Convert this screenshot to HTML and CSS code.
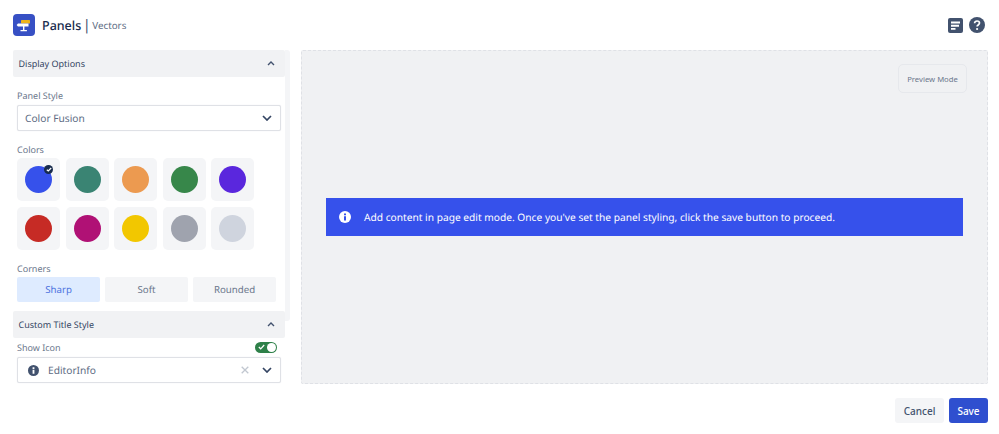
FILE: index.html
```html
<!DOCTYPE html>
<html lang="en">
<head>
<meta charset="utf-8">
<title>Panels | Vectors</title>
<link rel="stylesheet" href="styles.css">
</head>
<body>
<header class="top">
  <div class="brand">
    <svg class="logo" width="22" height="22" viewBox="0 0 22 22"><rect width="22" height="22" rx="4" fill="#3750c4"/><rect x="8" y="6" width="9" height="3.6" rx=".6" fill="#eeb41c"/><path d="M5 9.4h10.5v3H5l-1.4-1.5z" fill="#fff"/><path d="M10 12h1.4v4H10zM7.5 16h6.4v1.2H7.500z" fill="#fff"/></svg>
    <span class="name">Panels</span><span class="sep">|</span><span class="sub">Vectors</span>
  </div>
  <div class="tools">
    <svg width="15" height="15" viewBox="0 0 15 15"><rect width="15" height="15" rx="2" fill="#42526e"/><path d="M3 3.500h9v2H3zM3 6.700h8v2H3zM3 10h4.500v1.800H3z" fill="#fff"/></svg>
    <svg width="16" height="16" viewBox="0 0 16 16"><circle cx="8" cy="8" r="8" fill="#42526e"/><path d="M5.600 6.200c0-1.400 1.100-2.200 2.400-2.200s2.500.8 2.500 2.100c0 1.900-2.400 1.900-2.400 3.500" fill="none" stroke="#fff" stroke-width="1.700"/><circle cx="8.100" cy="12" r="1.100" fill="#fff"/></svg>
  </div>
</header>
<main class="body">
  <aside class="side">
    <section class="scroll">
      <div class="acc">Display Options<svg class="up" width="8" height="5" viewBox="0 0 8 5"><path d="M1 4l3-3 3 3" fill="none" stroke="#42526e" stroke-width="1.400"/></svg></div>
      <div class="group">
        <label class="lab first">Panel Style</label>
        <div class="select"><span class="val">Color Fusion</span><svg class="down" width="10" height="6" viewBox="0 0 10 6"><path d="M1 1l4 4 4-4" fill="none" stroke="#344563" stroke-width="1.700"/></svg></div>
        <label class="lab colors">Colors</label>
        <div class="swatches">
          <div class="sw"><i class="dot c1"></i><span class="tick"><svg width="6" height="5" viewBox="0 0 6 5"><path d="M.8 2.700l1.500 1.300L5.200 1" fill="none" stroke="#fff" stroke-width="1.200"/></svg></span></div>
          <div class="sw"><i class="dot c2"></i></div>
          <div class="sw"><i class="dot c3"></i></div>
          <div class="sw"><i class="dot c4"></i></div>
          <div class="sw"><i class="dot c5"></i></div>
          <div class="sw"><i class="dot c6"></i></div>
          <div class="sw"><i class="dot c7"></i></div>
          <div class="sw"><i class="dot c8"></i></div>
          <div class="sw"><i class="dot c9"></i></div>
          <div class="sw"><i class="dot c10"></i></div>
        </div>
        <label class="lab corners">Corners</label>
        <div class="seg">
          <span class="opt on">Sharp</span><span class="opt">Soft</span><span class="opt">Rounded</span>
        </div>
      </div>
    </section>
    <div class="acc second">Custom Title Style<svg class="up" width="8" height="5" viewBox="0 0 8 5"><path d="M1 4l3-3 3 3" fill="none" stroke="#42526e" stroke-width="1.400"/></svg></div>
    <div class="group tail">
      <div class="row"><label class="lab">Show Icon</label>
        <span class="toggle"><svg width="7" height="6" viewBox="0 0 7 6"><path d="M.8 3l1.900 1.800L6.200 1" fill="none" stroke="#fff" stroke-width="1.200"/></svg><b class="knob"></b></span>
      </div>
      <div class="select icon">
        <svg class="info" width="11" height="11" viewBox="0 0 12 12"><circle cx="6" cy="6" r="6" fill="#42526e"/><path d="M5 5.200h2v4.300H5zM5 2.500h2v1.800H5z" fill="#fff"/></svg>
        <span class="val grow">EditorInfo</span>
        <svg class="clear" width="8" height="8" viewBox="0 0 8 8"><path d="M.7.700l6.600 6.600M7.300.700L.7 7.300" stroke="#c1c7d0" stroke-width="1.300"/></svg>
        <svg class="down" width="10" height="6" viewBox="0 0 10 6"><path d="M1 1l4 4 4-4" fill="none" stroke="#344563" stroke-width="1.700"/></svg>
      </div>
    </div>
  </aside>
  <section class="canvas">
    <div class="canvas-top"><button class="preview">Preview Mode</button></div>
    <div class="banner">
      <svg width="12" height="12" viewBox="0 0 12 12"><circle cx="6" cy="6" r="6" fill="#fff"/><path d="M5 5.200h2v4.300H5zM5 2.500h2v1.800H5z" fill="#3651eb"/></svg>
      <span>Add content in page edit mode. Once you've set the panel styling, click the save button to proceed.</span>
    </div>
  </section>
</main>
<footer class="foot">
  <button class="btn cancel">Cancel</button>
  <button class="btn save">Save</button>
</footer>
</body>
</html>
```
FILE: styles.css
```css
* { box-sizing: border-box; }
html, body { margin: 0; padding: 0; }
body { width: 999px; height: 434px; overflow: hidden; background: #fff; font-family: "Noto Sans", sans-serif; color: #42526e; text-rendering: geometricPrecision; }
.top { height: 50px; padding: 14px 14px 0 13px; display: flex; justify-content: space-between; align-items: flex-start; }
.brand { display: flex; align-items: center; height: 22px; }
.logo { margin-right: 7px; }
.name { font-size: 12.500px; font-weight: 500; color: #172b4d; }
.sep { font-size: 14.500px; color: #42526e; margin: 0 1.500px; }
.sub { font-size: 9.800px; color: #5e6c84; }
.tools { display: flex; gap: 6px; align-items: center; margin-top: 3px; height: 16px; }
.body { display: flex; align-items: flex-start; padding-left: 13px; }
.side { width: 277px; margin-right: 11px; }
.scroll { width: 277px; height: 271px; border-right: 5px solid #f4f5f7; background: #fff; border-radius: 0 3px 3px 0; }
.acc { height: 27px; width: 272px; background: #f1f2f4; padding: 0 10px 0 5.500px; display: flex; align-items: center; justify-content: space-between; font-size: 9px; color: #344563; border-radius: 2px; }
.group { padding: 0 0 0 4px; }
.lab { display: block; font-size: 9px; line-height: 13px; color: #6b778c; }
.lab.first { padding-top: 12px; height: 28px; }
.select { width: 264px; height: 26px; border: 1.500px solid #dfe1e6; border-radius: 2px; display: flex; align-items: center; justify-content: space-between; padding: 0 8px 0 7px; background: #fff; box-shadow: 0 0 1px #dfe1e6; }
.val { font-size: 10.200px; color: #5e6c84; }
.lab.colors { margin-top: 12px; height: 15px; }
.swatches { display: grid; grid-template-columns: repeat(5, 43px); gap: 6px 5.500px; }
.sw { position: relative; width: 43px; height: 43px; background: #f4f5f7; border-radius: 5px; display: flex; align-items: center; justify-content: center; }
.dot { display: block; width: 27px; height: 27px; border-radius: 50%; }
.c1 { background: #3651eb; }
.c2 { background: #3a8473; }
.c3 { background: #ec9a50; }
.c4 { background: #37874a; }
.c5 { background: #5a27dd; }
.c6 { background: #c62b25; }
.c7 { background: #b01175; }
.c8 { background: #f2c700; }
.c9 { background: #9fa3ae; }
.c10 { background: #cfd4de; }
.tick { position: absolute; top: 7px; right: 7px; width: 9px; height: 9px; border-radius: 50%; background: #172b4d; display: flex; align-items: center; justify-content: center; }
.lab.corners { margin-top: 12px; height: 15px; }
.seg { display: flex; gap: 5px; }
.opt { width: 83px; height: 25px; background: #f4f5f7; border-radius: 2px; display: flex; align-items: center; justify-content: center; font-size: 9.700px; color: #6b778c; }
.opt.on { background: #deebff; color: #4c72e0; }
.acc.second { margin-top: -10px; position: relative; }
.tail { padding-top: 1px; }
.row { display: flex; justify-content: space-between; align-items: center; width: 260px; height: 16px; margin-bottom: 2px; }
.toggle { position: relative; width: 22px; height: 11px; border-radius: 6px; background: #2e8049; display: flex; align-items: center; padding-left: 3px; }
.knob { position: absolute; right: 1px; top: 1px; width: 9px; height: 9px; border-radius: 50%; background: #fff; }
.select.icon { padding-left: 10px; justify-content: flex-start; }
.grow { flex: 1; margin-left: 9px; }
.clear { margin-right: 13px; }
.canvas { width: 687px; height: 334px; background: #f0f1f3; border: 1px dashed #dfe1e6; border-radius: 2px; padding: 13px 20px 0 24px; }
.canvas-top { display: flex; justify-content: flex-end; height: 134px; }
.preview { width: 69px; height: 29px; border: 1px solid #e6e8ec; border-radius: 5px; background: #f0f1f3; font: 400 7.700px "Noto Sans", sans-serif; color: #6b778c; padding: 0; }
.banner { width: 637px; height: 38px; background: #3651eb; color: #fff; display: flex; align-items: center; gap: 13px; padding-left: 13px; font-size: 10.200px; }
.foot { display: flex; justify-content: flex-end; gap: 5px; padding: 14px 11px 0 0; }
.btn { height: 25px; border: 0; border-radius: 3px; font: 500 10px "Noto Sans", sans-serif; padding: 0; }
.cancel { width: 49px; background: #f4f5f7; color: #42526e; }
.save { width: 39px; background: #2f4fcf; color: #fff; }
```
